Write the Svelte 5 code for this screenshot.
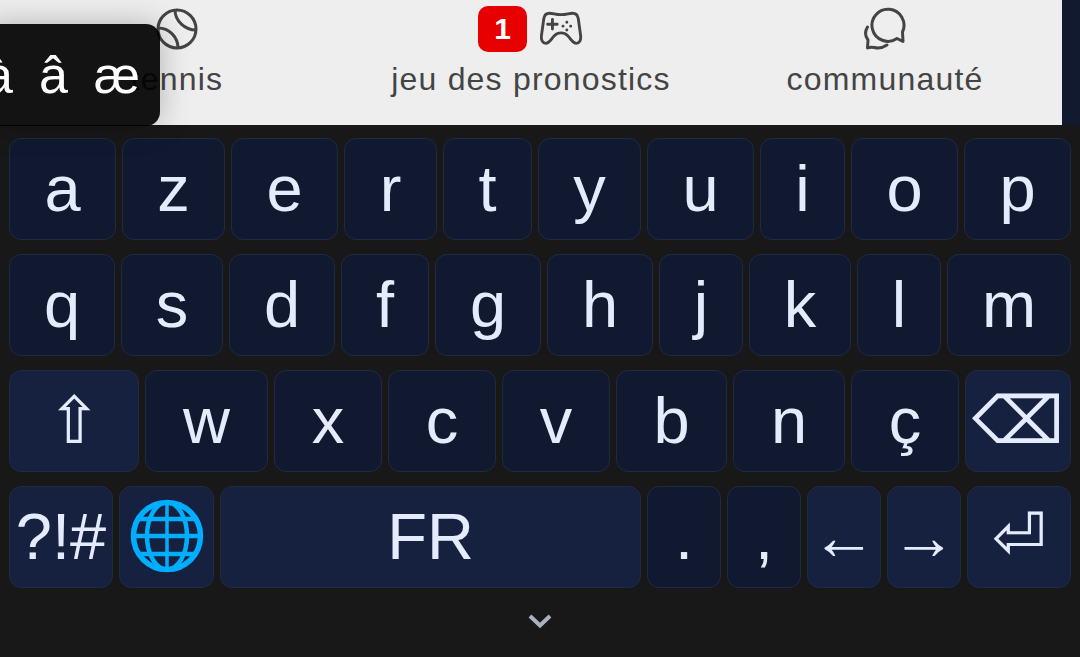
<script>
	const rows = [
		[['a', 107], ['z', 103], ['e', 107], ['r', 93], ['t', 89], ['y', 103], ['u', 107], ['i', 85], ['o', 107], ['p', 107]],
		[['q', 106], ['s', 102], ['d', 106], ['f', 88], ['g', 106], ['h', 106], ['j', 84], ['k', 102], ['l', 84], ['m', 124]],
		[['⇧', 130, true], ['w', 123], ['x', 108], ['c', 108], ['v', 108], ['b', 111], ['n', 112], ['ç', 108], ['⌫', 106, true]],
		[['?!#', 104, true], ['globe', 95, true], ['FR', 421, true], ['.', 74], [',', 74], ['←', 74, true], ['→', 74, true], ['⏎', 104, true]]
	];
</script>

<div class="page">
	<nav class="topbar">
		<div class="tabs">
			<div class="tab">
				<div class="icons">
					<svg width="44" height="44" viewBox="0 0 44 44" fill="none" stroke="#444" stroke-width="3">
						<circle cx="22" cy="22" r="19" />
						<path d="M20 3c0 11 10 20 21 20" />
						<path d="M3 21c11 0 20 9 20 20" />
					</svg>
				</div>
				<span>tennis</span>
			</div>
			<div class="tab">
				<div class="icons">
					<span class="badge">1</span>
					<svg width="44" height="44" viewBox="0 0 46 46" fill="none" stroke="#444" stroke-width="3" stroke-linecap="round" stroke-linejoin="round">
						<path d="M10 6.500C14 6.500 16 8 22 8S30 6.500 34 6.500C38 6.500 39.500 9 40 12L42.500 30C43 35 41 38 38 38 34 38 32 33 29 30 26 27 24 27 22 27S18 27 15 30C12 33 10 38 6 38 3 38 1 35 1.500 30L4 12C4.500 9 6 6.500 10 6.500Z" />
						<path d="M8 18h10M13 13v10" />
						<path d="M24 20h.1M32 20h.1M28 16h.1M28 24h.1" />
					</svg>
				</div>
				<span>jeu des pronostics</span>
			</div>
			<div class="tab">
				<div class="icons">
					<svg width="44" height="44" viewBox="0 0 44 44" fill="none" stroke="#444" stroke-width="3" stroke-linecap="round" stroke-linejoin="round">
						<path d="M34 31.500A16 16 0 1 1 39.500 25L40 34.500Z" />
						<path d="M4.500 20C2 24 2 29 5 33L4.500 41C9 39 11 41 15 41 18 41 21 40 24 38" />
					</svg>
				</div>
				<span>communauté</span>
			</div>
		</div>
		<div class="edge"></div>
	</nav>

	<div class="accents">
		<span>à</span>
		<span>â</span>
		<span>æ</span>
	</div>

	<div class="keyboard">
		{#each rows as row}
			<div class="row">
				{#each row as [label, width, special]}
					<button class="key" class:special style="width: {width}px">
						{#if label === 'globe'}
							<svg width="74" height="74" viewBox="0 0 74 74" fill="none" stroke="#00aeff" stroke-width="4.500">
								<circle cx="37" cy="37" r="33.500" stroke-width="5.500" />
								<ellipse cx="37" cy="37" rx="20" ry="33.500" />
								<path d="M37 3v68" stroke-width="3.500" />
								<path d="M3 37h68M7 20h60M7 55h60" />
							</svg>
						{:else}
							{label}
						{/if}
					</button>
				{/each}
			</div>
		{/each}
		<div class="hide">
			<svg width="26" height="16" viewBox="0 0 26 16" fill="none" stroke="#a9b2c0" stroke-width="4">
				<path d="M3 3l10 9.500L23 3" />
			</svg>
		</div>
	</div>
</div>

<style>
	:global(body) {
		background: #181818;
		font-family: 'Liberation Sans', Arial, sans-serif;
	}
	.page {
		position: relative;
		width: 1080px;
		height: 657px;
		overflow: hidden;
		background: #181818;
	}
	.topbar {
		display: flex;
		height: 125px;
	}
	.tabs {
		display: grid;
		grid-template-columns: repeat(3, 1fr);
		width: 1062px;
		background: #eee;
	}
	.edge {
		flex: 1;
		background: #111a2e;
	}
	.tab {
		display: flex;
		flex-direction: column;
		align-items: center;
		padding-top: 6px;
		color: #444;
		font-size: 32px;
		letter-spacing: 1.2px;
	}
	.icons {
		display: flex;
		align-items: center;
		gap: 13px;
		height: 46px;
		margin-bottom: 9px;
	}
	.badge {
		display: flex;
		align-items: center;
		justify-content: center;
		width: 49px;
		height: 46px;
		border-radius: 10px;
		background: #e60000;
		color: #fff;
		font-size: 30px;
		font-weight: 700;
		letter-spacing: 0;
	}
	.accents {
		position: absolute;
		top: 24px;
		left: -16px;
		display: flex;
		align-items: center;
		gap: 26px;
		box-sizing: border-box;
		width: 176px;
		height: 102px;
		border-radius: 14px;
		background: rgba(0, 0, 0, 0.92);
		box-shadow: 0 0 30px rgba(0, 0, 0, 0.25);
		color: #fff;
		font-size: 52px;
	}
	.keyboard {
		display: flex;
		flex-direction: column;
		gap: 14px;
		padding: 13px 9px 0;
	}
	.row {
		display: flex;
		gap: 6px;
	}
	.key {
		display: flex;
		align-items: center;
		justify-content: center;
		box-sizing: border-box;
		height: 102px;
		padding: 0 0 2px;
		border: 1px solid #1f2a44;
		border-radius: 12px;
		background: #10192f;
		color: #e4ebfc;
		font-family: inherit;
		font-size: 65px;
	}
	.special {
		background: #162140;
	}
	.hide {
		display: flex;
		justify-content: center;
		margin-top: 11px;
	}
</style>
